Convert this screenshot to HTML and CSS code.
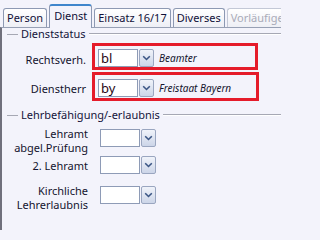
FILE: index.html
```html
<!DOCTYPE html>
<html lang="de">
<head>
<meta charset="utf-8">
<title>Dienst</title>
<link rel="stylesheet" href="styles.css">
</head>
<body>
<div class="window">
  <div class="tabs">
    <div class="tab">Person</div>
    <div class="tab active">Dienst</div>
    <div class="tab">Einsatz 16/17</div>
    <div class="tab">Diverses</div>
    <div class="tab disabled">Vorläufige P</div>
  </div>
  <div class="panel">
    <div class="group-title g1"><span class="lead"></span><span class="gt">Dienststatus</span><span class="rule"></span></div>
    <div class="row r1">
      <div class="label l1">Rechtsverh.</div>
      <div class="mark m1">
        <div class="combo"><div class="cinput">bl</div><div class="cbtn"><svg width="9" height="6" viewBox="0 0 9 6"><path d="M1.2 1.3 L4.5 4.5 L7.8 1.3" fill="none" stroke="#3a5584" stroke-width="1.6"/></svg></div></div>
        <span class="desc">Beamter</span>
      </div>
    </div>
    <div class="row r2">
      <div class="label l1">Dienstherr</div>
      <div class="mark m2">
        <div class="combo"><div class="cinput">by</div><div class="cbtn"><svg width="9" height="6" viewBox="0 0 9 6"><path d="M1.2 1.3 L4.5 4.5 L7.8 1.3" fill="none" stroke="#3a5584" stroke-width="1.6"/></svg></div></div>
        <span class="desc">Freistaat Bayern</span>
      </div>
    </div>

    <div class="group-title g2"><span class="lead"></span><span class="gt">Lehrbefähigung/-erlaubnis</span><span class="rule"></span></div>
    <div class="row r3">
      <div class="label l2">Lehramt<br>abgel.Prüfung</div>
      <div class="combo top"><div class="cinput"></div><div class="cbtn"><svg width="9" height="6" viewBox="0 0 9 6"><path d="M1.2 1.3 L4.5 4.5 L7.8 1.3" fill="none" stroke="#3a5584" stroke-width="1.6"/></svg></div></div>
    </div>
    <div class="row r4">
      <div class="label l2">2. Lehramt</div>
      <div class="combo"><div class="cinput"></div><div class="cbtn"><svg width="9" height="6" viewBox="0 0 9 6"><path d="M1.2 1.3 L4.5 4.5 L7.8 1.3" fill="none" stroke="#3a5584" stroke-width="1.6"/></svg></div></div>
    </div>
    <div class="row r5">
      <div class="label l2">Kirchliche<br>Lehrerlaubnis</div>
      <div class="combo top"><div class="cinput"></div><div class="cbtn"><svg width="9" height="6" viewBox="0 0 9 6"><path d="M1.2 1.3 L4.5 4.5 L7.8 1.3" fill="none" stroke="#3a5584" stroke-width="1.6"/></svg></div></div>
    </div>
  </div>
</div>
</body>
</html>
```
FILE: styles.css
```css
html, body {
  margin: 0;
  padding: 0;
  background: #f3f3fb;
}
body {
  font-family: "Noto Sans", "Open Sans", sans-serif;
  font-size: 11px;
  color: #14142e;
  width: 281px;
  height: 230px;
  overflow: hidden;
}
.window {
  display: flex;
  flex-direction: column;
  height: 230px;
}
.tabs {
  display: flex;
  align-items: flex-end;
  gap: 2px;
  height: 27px;
  padding-left: 3px;
  white-space: nowrap;
  position: relative;
  z-index: 1;
}
.tab {
  height: 18px;
  line-height: 17px;
  padding: 0 3px;
  border: 1px solid #8d99b3;
  border-bottom: none;
  border-radius: 3px 3px 0 0;
  background: linear-gradient(#ffffff, #eeeff5);
  color: #101038;
  flex: none;
}
.tab.active {
  height: 22px;
  line-height: 20px;
  border-top: 2px solid #3f86cc;
  background: #f3f3fb;
  margin-bottom: -1px;
  padding: 0 4px;
}
.tab.disabled {
  color: #a9abb8;
  border-color: #c3c8d6;
  flex: 1;
  min-width: 0;
  border-right: none;
  border-top-right-radius: 0;
}
.panel {
  flex: 1;
  border-top: 1px solid #97a0b4;
  border-left: 2px solid #70707c;
  background: #f3f3fb;
}
.group-title {
  display: flex;
  align-items: center;
  height: 12px;
  line-height: 12px;
}
.group-title.g2 {
  margin-top: 8px;
}
.lead {
  width: 11px;
  margin-left: 5px;
  border-top: 1px solid #a6a8b4;
}
.gt {
  padding: 0 3px;
  color: #14143a;
}
.rule {
  flex: 1;
  border-top: 1px solid #a6a8b4;
  border-bottom: 1px solid #ffffff;
}
.row {
  display: flex;
}
.label {
  text-align: right;
  flex: none;
  white-space: nowrap;
}
.l1 {
  width: 84px;
  margin-right: 6px;
  padding-top: 9px;
}
.l2 {
  width: 86px;
  margin-right: 12px;
  line-height: 14px;
}
.r1 {
  margin-top: 3px;
}
.r2 {
  margin-top: 2px;
}
.r3 {
  margin-top: 6px;
}
.r4 {
  margin-top: 1px;
  align-items: center;
}
.r4 .l2 {
  padding-top: 2px;
}
.r5 {
  margin-top: 10px;
}
.mark {
  border: 3px solid #e51b2a;
  width: 155px;
  display: flex;
  align-items: center;
  gap: 5px;
  padding: 3px 2px 0 3px;
}
.m2 {
  width: 156px;
  padding-top: 4px;
  padding-bottom: 1px;
}
.combo {
  display: flex;
  height: 18px;
  flex: none;
}
.combo.top {
  margin-top: 2px;
}
.cinput {
  width: 36px;
  height: 16px;
  border: 1px solid #8e9bb6;
  background: #ffffff;
  font-size: 13px;
  line-height: 16px;
  padding-left: 2px;
  color: #2a0816;
}
.cbtn {
  width: 13px;
  height: 16px;
  border: 1px solid #9aa6c0;
  border-radius: 2px;
  background: linear-gradient(#f0f3fa, #ccd5e8);
  display: flex;
  align-items: center;
  justify-content: center;
  margin-left: 1px;
}
.desc {
  font-style: italic;
  font-size: 10px;
  color: #14142e;
  white-space: nowrap;
}
```
